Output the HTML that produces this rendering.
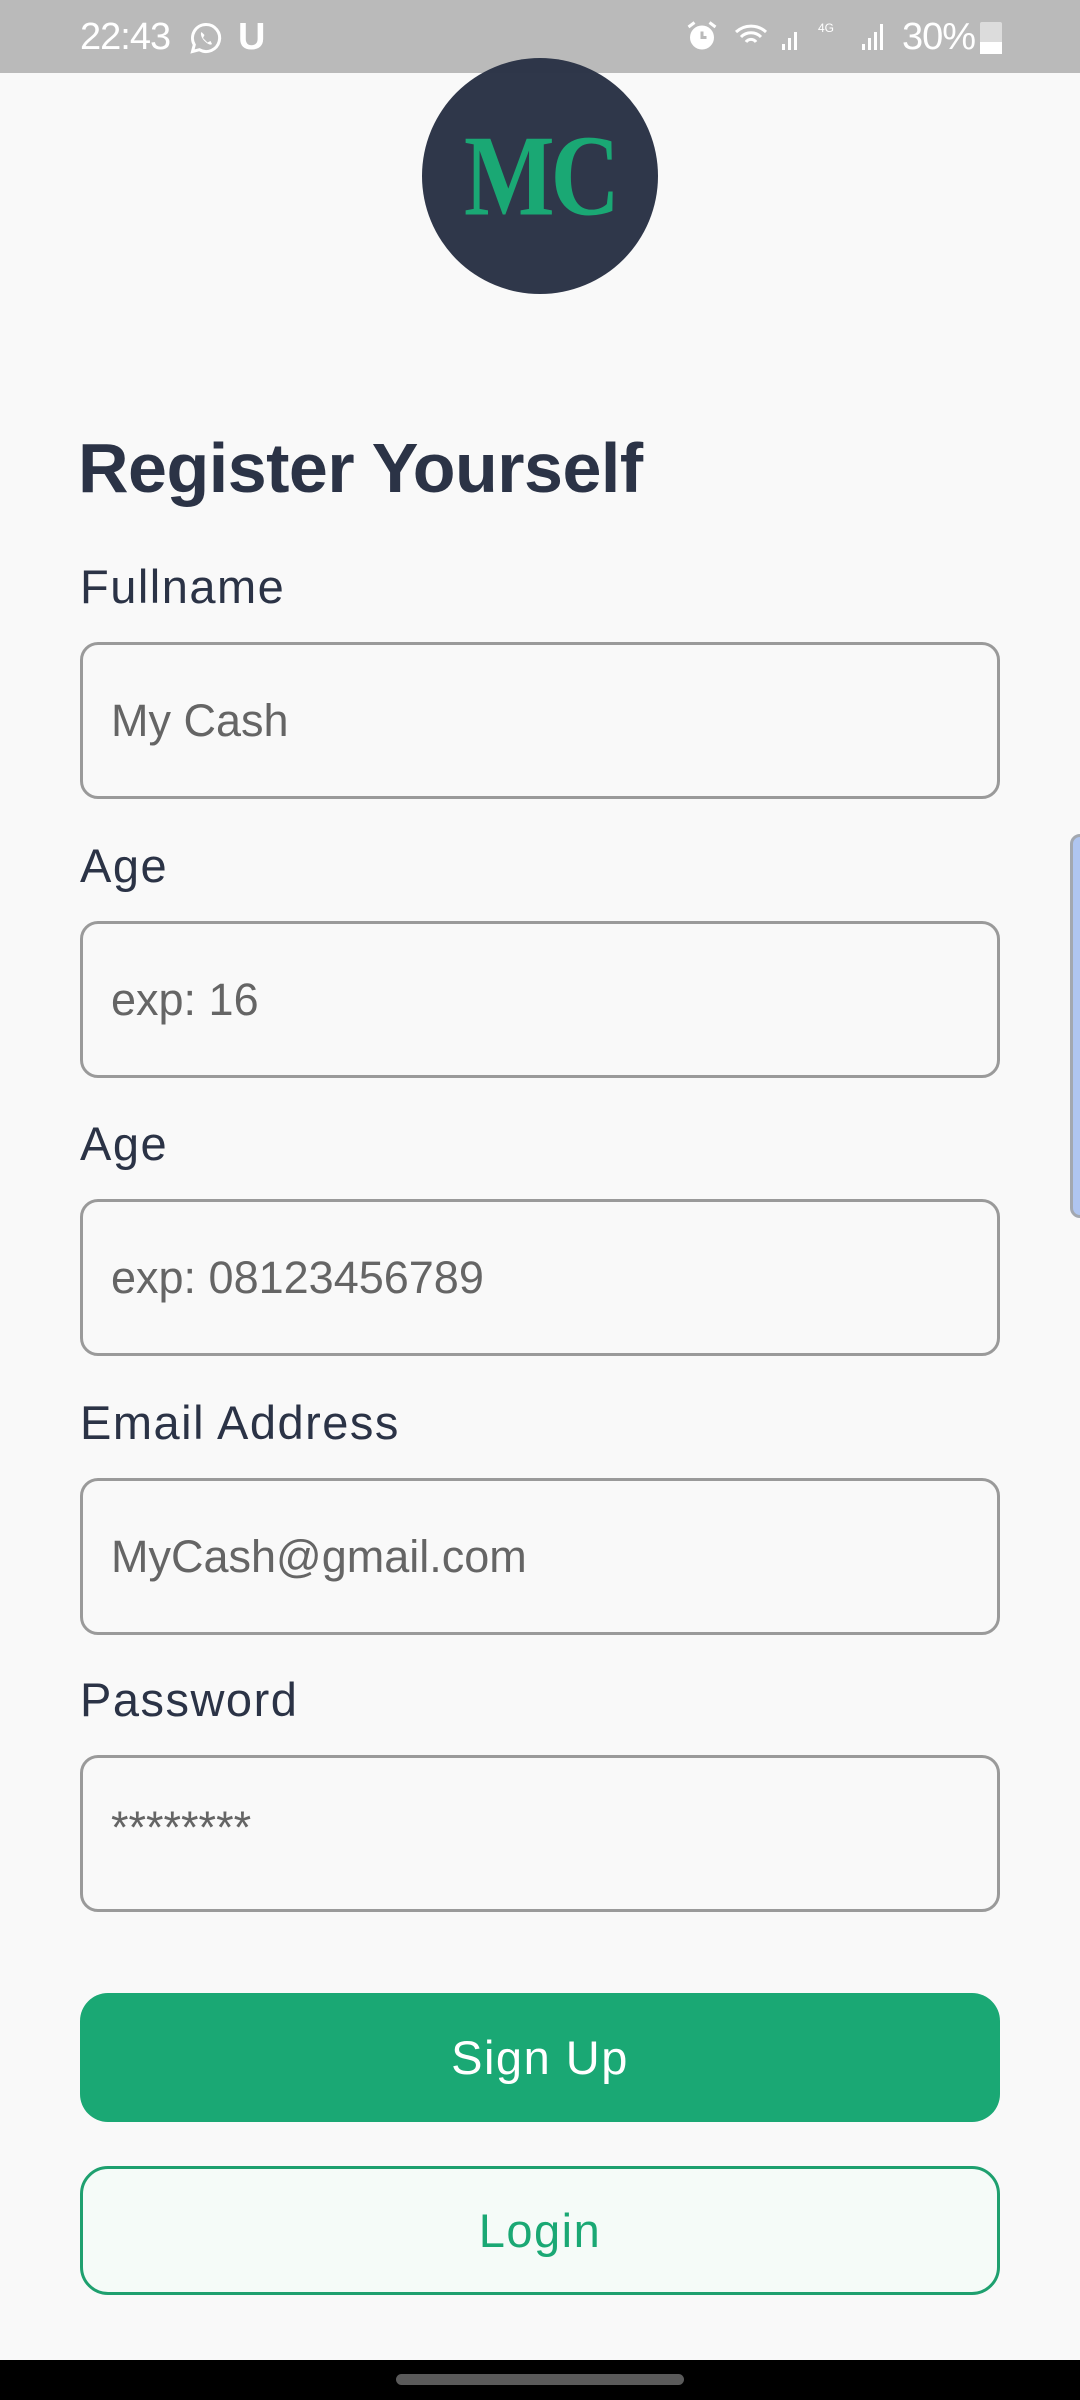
<!DOCTYPE html>
<html><head><meta charset="utf-8"><style>
*{margin:0;padding:0;box-sizing:border-box}
body{width:1080px;height:2400px;background:#f9f9f9;position:relative;overflow:hidden;font-family:"Liberation Sans",sans-serif}
.abs{position:absolute}
.sb{left:0;top:0;width:1080px;height:73px;background:#bababa;color:#fff;font-size:38px}
.lbl{left:80px;font-size:47px;color:#2b3346;letter-spacing:1.5px;line-height:50px}
.inp{left:80px;width:920px;height:157px;border:3px solid #9a9a9a;border-radius:18px}
.ph{position:absolute;left:28px;top:0;line-height:151px;font-size:45px;color:#656565}
.btn{left:80px;width:920px;height:129px;border-radius:28px;text-align:center;line-height:129px;font-size:47px;letter-spacing:1.5px}
</style></head><body>
<div class="abs sb">
 <div class="abs" style="left:80px;top:16px;letter-spacing:-1px">22:43</div>
 <svg class="abs" style="left:188px;top:20px" width="36" height="36" viewBox="0 0 24 24"><path d="M12 3a9 9 0 0 0-7.8 13.5L3 21l4.6-1.2A9 9 0 1 0 12 3z" fill="none" stroke="#fff" stroke-width="2"/><path d="M9 8c-1 1 0 4 2 6s4 3 5 2l-1-2-2 1-3-3 1-2z" fill="#fff"/></svg>
 <div class="abs" style="left:238px;top:16px;font-weight:bold">U</div>
 <svg class="abs" style="left:684px;top:18px" width="36" height="36" viewBox="0 0 24 24"><circle cx="12" cy="13" r="8" fill="#fff"/><path d="M12 9v4h3" stroke="#bababa" stroke-width="2" fill="none"/><path d="M3 6l4-3M21 6l-4-3" stroke="#fff" stroke-width="2"/></svg>
 <svg class="abs" style="left:732px;top:18px" width="110" height="36" viewBox="0 0 110 36"><path d="M4 14a22 22 0 0 1 30 0M9 19a14 14 0 0 1 20 0M14 24a6 6 0 0 1 10 0" stroke="#fff" stroke-width="3" fill="none"/><rect x="50" y="26" width="3" height="6" fill="#fff"/><rect x="56" y="20" width="3" height="12" fill="#fff"/><rect x="62" y="14" width="3" height="18" fill="#fff"/><text x="86" y="14" font-size="12" fill="#fff" font-family="Liberation Sans">4G</text></svg>
 <svg class="abs" style="left:858px;top:18px" width="30" height="36" viewBox="0 0 30 36"><rect x="4" y="26" width="3" height="6" fill="#fff"/><rect x="10" y="20" width="3" height="12" fill="#fff"/><rect x="16" y="14" width="3" height="18" fill="#fff"/><rect x="22" y="6" width="3" height="26" fill="#fff"/></svg>
 <div class="abs" style="left:902px;top:16px;letter-spacing:-1px">30%</div>
 <div class="abs" style="left:980px;top:22px;width:22px;height:32px;background:#dcdcdc;border-radius:2px"><div style="position:absolute;bottom:0;left:0;width:22px;height:12px;background:#fff"></div></div>
</div>
<div class="abs" style="left:422px;top:58px;width:236px;height:236px;border-radius:50%;background:#2b3346;opacity:.98"></div>
<div class="abs" style="left:422px;top:58px;width:236px;height:236px;text-align:center;line-height:236px;font-family:'Liberation Serif',serif;font-size:96px;font-weight:bold;color:#1aa874;letter-spacing:-4px;transform:scaleY(1.2)">MC</div>
<div class="abs" style="left:78px;top:428px;font-size:70px;color:#2b3346;font-weight:bold;letter-spacing:-0.5px">Register Yourself</div>
<div class="abs lbl" style="top:562px">Fullname</div>
<div class="abs inp" style="top:642px"><div class="ph">My Cash</div></div>
<div class="abs lbl" style="top:841px">Age</div>
<div class="abs inp" style="top:921px"><div class="ph">exp: 16</div></div>
<div class="abs lbl" style="top:1119px">Age</div>
<div class="abs inp" style="top:1199px"><div class="ph">exp: 08123456789</div></div>
<div class="abs lbl" style="top:1398px">Email Address</div>
<div class="abs inp" style="top:1478px"><div class="ph">MyCash@gmail.com</div></div>
<div class="abs lbl" style="top:1675px">Password</div>
<div class="abs inp" style="top:1755px"><div class="ph" style="top:-6px">********</div></div>
<div class="abs btn" style="top:1993px;background:#1aa874;color:#fff">Sign Up</div>
<div class="abs btn" style="top:2166px;background:#f5fbf8;border:3px solid #1ea06f;color:#1aa874;line-height:123px">Login</div>
<div class="abs" style="left:1070px;top:834px;width:20px;height:384px;background:#afc5f0;border:3px solid #a3a8b0;border-radius:10px"></div>
<div class="abs" style="left:0;top:2360px;width:1080px;height:40px;background:#000"></div>
<div class="abs" style="left:396px;top:2374px;width:288px;height:11px;background:#5a5a5a;border-radius:6px"></div>
</body></html>
